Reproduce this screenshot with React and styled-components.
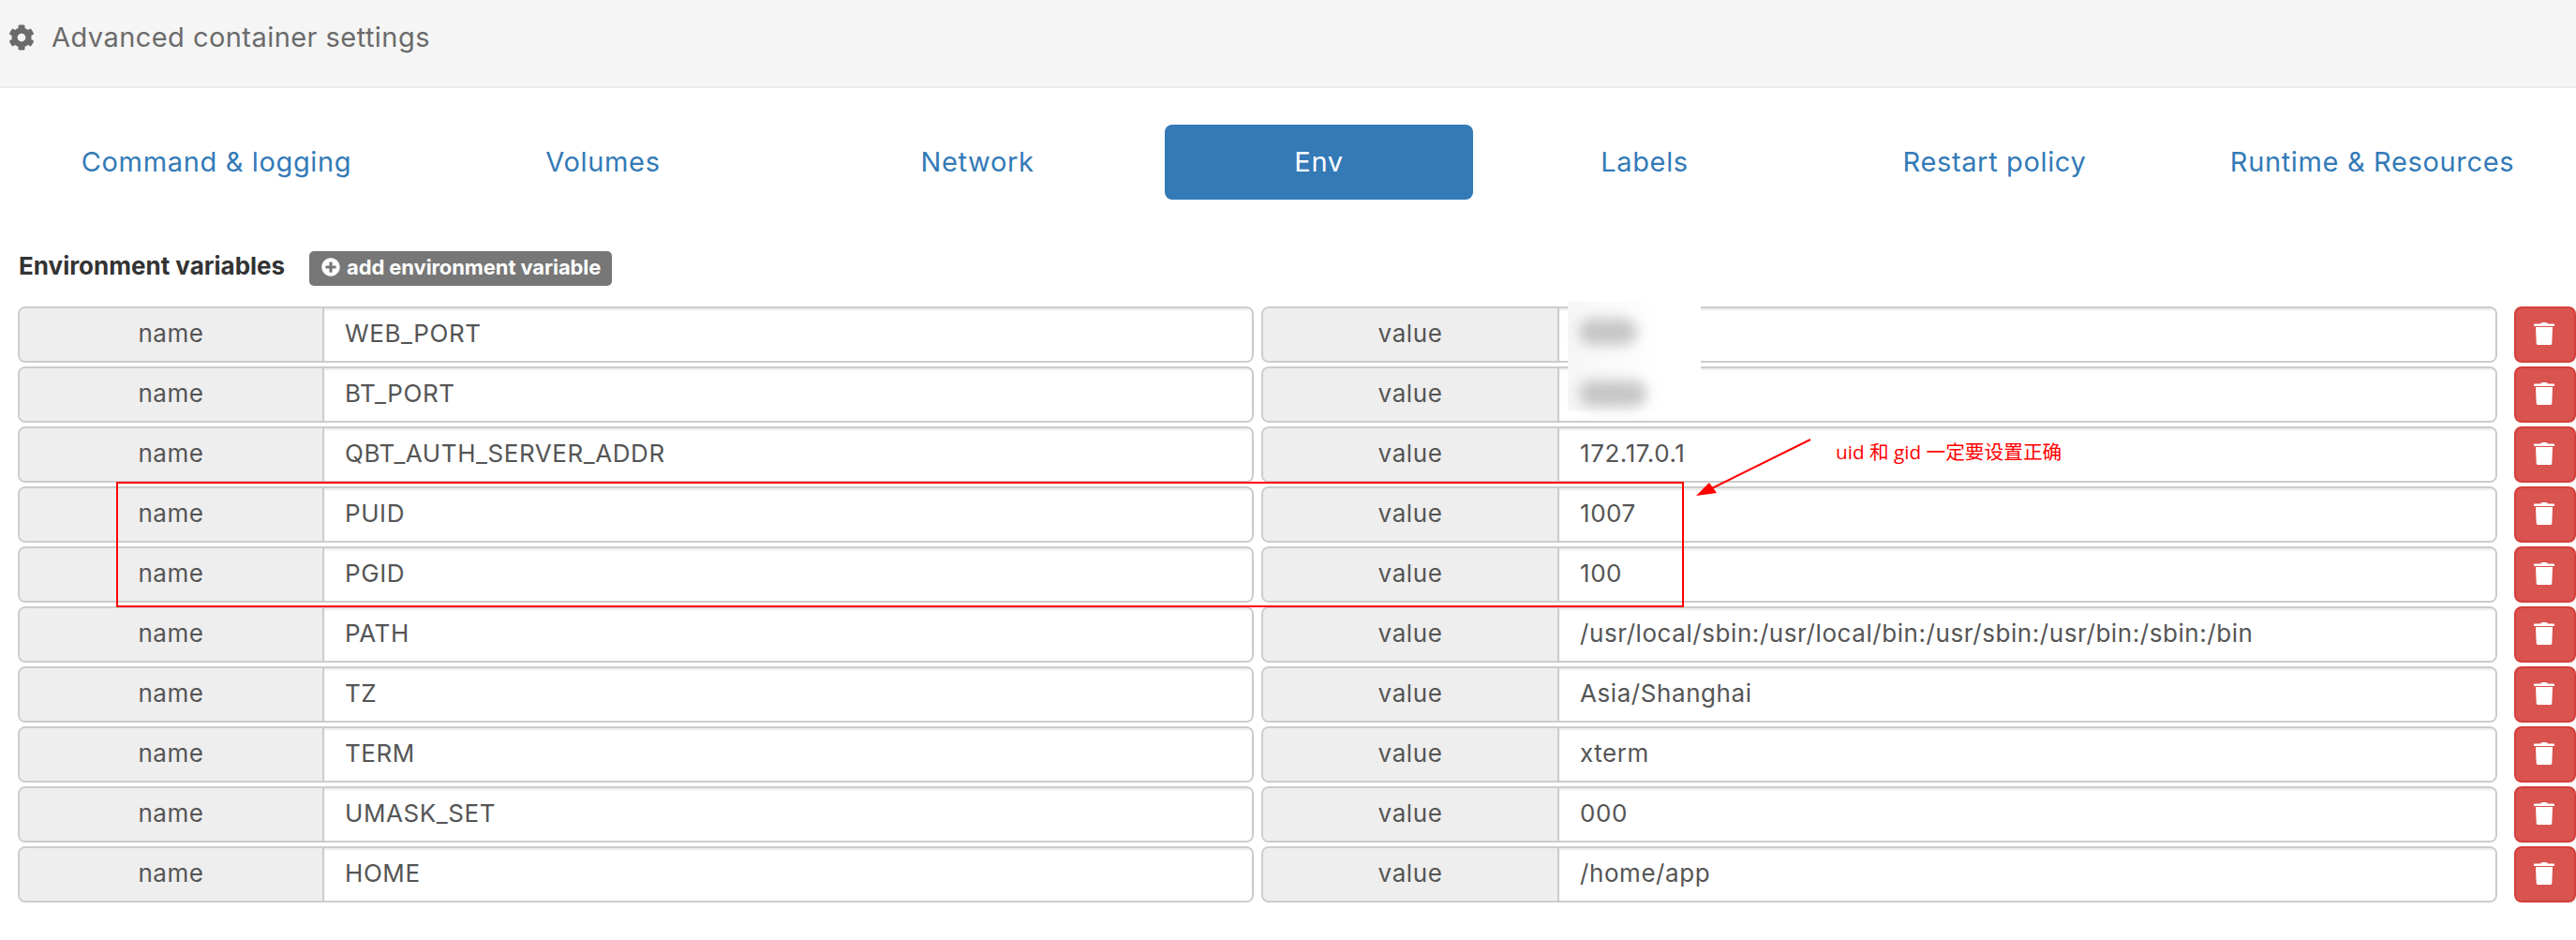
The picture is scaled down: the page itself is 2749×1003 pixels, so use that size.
import React from 'react'
import styled, { createGlobalStyle } from 'styled-components'
import { FaCog, FaPlusCircle } from 'react-icons/fa'

const GlobalStyle = createGlobalStyle`
  html, body {
    margin: 0;
    background: #fff;
    font-family: Inter, "Noto Sans", sans-serif;
    color: #555;
  }
  * { box-sizing: border-box; }
`

const Page = styled.div`
  position: relative;
  width: 2749px;
  height: 1003px;
  overflow: hidden;
`

const Header = styled.div`
  height: 94px;
  padding: 0 0 13px 9px;
  display: flex;
  align-items: center;
  gap: 18px;
  background: #f5f5f5;
  border-bottom: 2px solid #eaeaea;
  color: #6b6b6b;
  font-size: 29px;
  letter-spacing: 0.45px;
  svg { width: 28px; height: 28px; }
`

const Tabs = styled.div`
  display: flex;
  gap: 2px;
  margin: 39px 0 0 20px;
`

const Tab = styled.div`
  width: ${p => p.$w}px;
  height: 80px;
  padding-bottom: 2px;
  display: flex;
  align-items: center;
  justify-content: center;
  border-radius: 8px;
  font-size: 29px;
  letter-spacing: 0.65px;
  color: ${p => (p.$active ? '#fff' : '#337ab7')};
  background: ${p => (p.$active ? '#337ab7' : 'transparent')};
`

const Heading = styled.div`
  display: flex;
  align-items: center;
  gap: 27px;
  margin: 55px 0 22px 20px;
  height: 37px;
`

const Title = styled.div`
  width: 283px;
  padding-bottom: 7px;
  font-size: 26px;
  font-weight: 700;
  color: #333;
  white-space: nowrap;
`

const AddButton = styled.div`
  width: 323px;
  height: 37px;
  display: flex;
  align-items: center;
  gap: 7px;
  padding: 0 0 4px 13px;
  background: #777;
  border-radius: 5px;
  color: #fff;
  font-size: 22px;
  font-weight: 700;
  letter-spacing: -0.1px;
  white-space: nowrap;
  svg { width: 20px; height: 20px; flex: none; }
`

const Rows = styled.div`
  display: flex;
  flex-direction: column;
  gap: 4px;
  padding-left: 19px;
`

const Row = styled.div`
  display: flex;
  height: 60px;
`

const Group = styled.div`
  display: flex;
  width: ${p => p.$w}px;
  margin-right: ${p => p.$mr}px;
  border: 2px solid #ccc;
  border-radius: 8px;
  overflow: hidden;
  font-size: 26px;
  letter-spacing: 0.57px;
`

const Addon = styled.div`
  width: ${p => p.$w}px;
  padding-bottom: 4px;
  display: flex;
  align-items: center;
  justify-content: center;
  background: #eee;
  border-right: 2px solid #ccc;
  flex: none;
`

const Field = styled.div`
  flex: 1;
  display: flex;
  align-items: center;
  padding: 0 0 4px 22px;
  background: #fff;
  box-shadow: inset 0 2px 2px rgba(0, 0, 0, 0.075);
  white-space: nowrap;
`

const DeleteButton = styled.div`
  width: 66px;
  padding: 0 2px 3px 0;
  display: flex;
  align-items: center;
  justify-content: center;
  background: #d9534f;
  border: 2px solid #d43f3a;
  border-radius: 8px;
  svg { width: 22px; height: 24px; }
`

const Highlight = styled.div`
  position: absolute;
  left: 124px;
  top: 514px;
  width: 1673px;
  height: 134px;
  border: 2px solid #f00;
`

const Note = styled.div`
  position: absolute;
  left: 1959px;
  top: 468px;
  color: #f00;
  font-size: 20.7px;
  line-height: 28px;
  font-family: "Open Sans", "Noto Sans CJK SC", sans-serif;
  white-space: nowrap;
`

const ArrowSvg = styled.svg`
  position: absolute;
  left: 1800px;
  top: 460px;
`

const BlurPatch = styled.div`
  position: absolute;
  left: 1673px;
  top: 322px;
  width: 142px;
  height: 116px;
  background: linear-gradient(90deg, #f6f6f6, #fff 70%);
`

const Smudge = styled.div`
  position: absolute;
  left: 12px;
  top: ${p => p.$top}px;
  width: ${p => p.$w}px;
  height: 28px;
  border-radius: 14px;
  background: #c6c6c6;
  filter: blur(7px);
`

const TrashIcon = () => (
  <svg viewBox="0 0 22 24" fill="#fff">
    <path d="M7 1.500C7.600.5 8.600 0 11 0s3.400.5 4 1.500h6c.6 0 1 .4 1 1V4H0V2.500c0-.6.4-1 1-1z" />
    <path d="M2 5h18l-.7 17.200c-.1 1-.8 1.800-1.800 1.800h-13c-1 0-1.700-.8-1.800-1.800z" />
  </svg>
)

const tabs = [
  ['Command & logging', 422],
  ['Volumes', 399],
  ['Network', 396],
  ['Env', 329, true],
  ['Labels', 362],
  ['Restart policy', 381],
  ['Runtime & Resources', 421],
]

const envs = [
  ['WEB_PORT', ''],
  ['BT_PORT', ''],
  ['QBT_AUTH_SERVER_ADDR', '172.17.0.1'],
  ['PUID', '1007'],
  ['PGID', '100'],
  ['PATH', '/usr/local/sbin:/usr/local/bin:/usr/sbin:/usr/bin:/sbin:/bin'],
  ['TZ', 'Asia/Shanghai'],
  ['TERM', 'xterm'],
  ['UMASK_SET', '000'],
  ['HOME', '/home/app'],
]

export default function App() {
  return (
    <Page>
      <GlobalStyle />
      <Header>
        <FaCog />
        <span>Advanced container settings</span>
      </Header>
      <Tabs>
        {tabs.map(([label, w, active]) => (
          <Tab key={label} $w={w} $active={active}>{label}</Tab>
        ))}
      </Tabs>
      <Heading>
        <Title>Environment variables</Title>
        <AddButton><FaPlusCircle />add environment variable</AddButton>
      </Heading>
      <Rows>
        {envs.map(([name, value]) => (
          <Row key={name}>
            <Group $w={1319} $mr={8}>
              <Addon $w={325}>name</Addon>
              <Field>{name}</Field>
            </Group>
            <Group $w={1319} $mr={18}>
              <Addon $w={316}>value</Addon>
              <Field>{value}</Field>
            </Group>
            <DeleteButton><TrashIcon /></DeleteButton>
          </Row>
        ))}
      </Rows>
      <Highlight />
      <BlurPatch>
        <Smudge $top={18} $w={62} />
        <Smudge $top={84} $w={72} />
      </BlurPatch>
      <ArrowSvg width="140" height="80" viewBox="0 0 140 80">
        <path d="M132 9L27 61" stroke="#f00" strokeWidth="2" fill="none" />
        <path d="M10 69L24 55L32 66z" fill="#f00" />
      </ArrowSvg>
      <Note>uid 和 gid 一定要设置正确</Note>
    </Page>
  )
}
